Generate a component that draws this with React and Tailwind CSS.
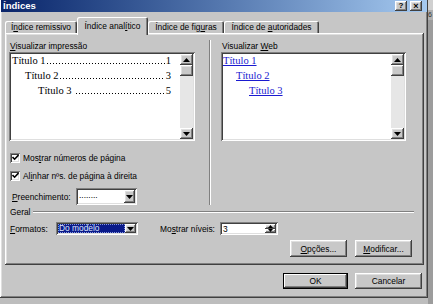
const raised =
  'shadow-[inset_-1px_-1px_0_#404040,inset_1px_1px_0_#ffffff,inset_-2px_-2px_0_#808080,inset_2px_2px_0_#dfdfdf]'
const sunken =
  'shadow-[inset_1px_1px_0_#808080,inset_-1px_-1px_0_#ffffff,inset_2px_2px_0_#404040,inset_-2px_-2px_0_#dfdfdf]'

function U({ children }) {
  return <span className="underline decoration-1 underline-offset-[1px]">{children}</span>
}

function Arrow({ up }) {
  return (
    <svg width="7" height="4" viewBox="0 0 7 4">
      {up ? <path d="M3.5 0 L7 4 L0 4 Z" fill="#000" /> : <path d="M0 0 L7 0 L3.5 4 Z" fill="#000" />}
    </svg>
  )
}

function ScrollBar() {
  return (
    <div className="w-[13px] shrink-0 h-full flex flex-col bg-[#e6e6e6]">
      <div className={`h-[11px] bg-[#c8c8c8] flex items-center justify-center ${raised}`}>
        <Arrow up />
      </div>
      <div className={`h-[11px] bg-[#c8c8c8] ${raised}`} />
      <div className="flex-1" />
      <div className={`h-[11px] bg-[#c8c8c8] flex items-center justify-center ${raised}`}>
        <Arrow />
      </div>
    </div>
  )
}

function Check() {
  return (
    <div className={`w-[10px] h-[10px] bg-white flex items-center justify-center ${sunken}`}>
      <svg width="7" height="7" viewBox="0 0 7 7">
        <path d="M0.5 3 L2.6 5.2 L6.5 1" stroke="#000" strokeWidth="1.6" fill="none" />
      </svg>
    </div>
  )
}

function DropButton({ h }) {
  return (
    <div className={`w-[11px] ${h} bg-[#c8c8c8] flex items-center justify-center ${raised}`}>
      <Arrow />
    </div>
  )
}

function Button({ w, children, def }) {
  return (
    <div
      className={`${w} h-full bg-[#c8c8c8] flex items-center justify-center ${
        def
          ? 'shadow-[inset_0_0_0_1px_#000000,inset_-2px_-2px_0_#404040,inset_2px_2px_0_#ffffff,inset_-3px_-3px_0_#808080]'
          : raised
      }`}
    >
      {children}
    </div>
  )
}

const tocRows = [
  { label: 'Título 1', page: '1', pad: 'pl-[1px]', gap: 'ml-[1px]' },
  { label: 'Título 2', page: '3', pad: 'pl-[14px]', gap: 'ml-[1px]' },
  { label: 'Título 3', page: '5', pad: 'pl-[27px]', gap: 'ml-[4px]' },
]

export default function App() {
  return (
    <div className="w-[433px] h-[304px] flex bg-[#bdbdbd] overflow-hidden font-['Liberation_Sans',Arial,sans-serif] text-[8.4px] leading-[10px] text-black">
      <div className={`w-[428px] h-[298px] shrink-0 bg-[#c6c6c6] flex flex-col ${raised}`}>
        {/* title bar */}
        <div className="h-[12px] mx-[1px] bg-gradient-to-r from-[#0a246a] to-[#a6caf0] flex items-center pl-[2px] pr-[5px]">
          <span className="text-white font-bold text-[9.5px] leading-[12px] flex-1">Índices</span>
          <div className={`w-[12px] h-[10px] bg-[#c8c8c8] flex items-center justify-center font-bold text-[8px] ${raised}`}>?</div>
          <div className={`ml-[3px] w-[12px] h-[10px] bg-[#c8c8c8] flex items-center justify-center font-bold text-[9px] ${raised}`}>×</div>
        </div>

        {/* tabs */}
        <div className="h-[21px] pl-[5px] flex items-end">
          <div className="w-[72px] h-[12px] flex items-center justify-center rounded-t-[2px] shadow-[inset_1px_1px_0_#ffffff,inset_-1px_0_0_#404040,inset_-2px_0_0_#808080]">
            <span>Í<U>n</U>dice remissivo</span>
          </div>
          <div className="relative z-10 -mb-[2px] w-[71px] h-[18px] pt-[4px] flex justify-center bg-[#c6c6c6] rounded-t-[2px] shadow-[inset_1px_1px_0_#ffffff,inset_-1px_0_0_#404040,inset_-2px_0_0_#808080]">
            <span>Índice anal<U>í</U>tico</span>
          </div>
          <div className="w-[76px] h-[12px] flex items-center justify-center rounded-t-[2px] shadow-[inset_1px_1px_0_#ffffff,inset_-1px_0_0_#404040,inset_-2px_0_0_#808080]">
            <span>Índice de fig<U>u</U>ras</span>
          </div>
          <div className="w-[95px] h-[12px] flex items-center justify-center rounded-t-[2px] shadow-[inset_1px_1px_0_#ffffff,inset_-1px_0_0_#404040,inset_-2px_0_0_#808080]">
            <span>Índice de <U>a</U>utoridades</span>
          </div>
        </div>

        {/* panel */}
        <div className={`ml-[5px] w-[419px] h-[232px] flex flex-col ${raised}`}>
          <div className="mt-[7px] h-[165px] flex">
            <div className="ml-[4px] w-[200px] flex flex-col">
              <div className="mt-[1px] pl-[1px] h-[10px]">
                <U>V</U>isualizar impressão
              </div>
              <div className={`mt-[1px] w-[186px] h-[89px] bg-white flex p-[2px] ${sunken}`}>
                <div className="flex-1 min-w-0 overflow-hidden -mt-[1px] pr-[9px] font-['Liberation_Serif','Times_New_Roman',serif] text-[10.5px] leading-[15px]">
                  {tocRows.map((r) => (
                    <div key={r.label} className={`h-[15px] flex ${r.pad}`}>
                      <span className="whitespace-nowrap">{r.label}</span>
                      <span
                        className={`flex-1 min-w-0 self-end mb-[4px] mr-[1px] h-[1px] bg-[linear-gradient(to_right,#000000_1px,transparent_1px)] bg-[length:3px_1px] bg-repeat-x ${r.gap}`}
                      />
                      <span>{r.page}</span>
                    </div>
                  ))}
                </div>
                <ScrollBar />
              </div>
              <div className="mt-[10px] h-[13px] flex items-center pl-[1px]">
                <Check />
                <span className="ml-[3px]">
                  Mos<U>t</U>rar números de página
                </span>
              </div>
              <div className="mt-[5px] h-[13px] flex items-center pl-[1px]">
                <Check />
                <span className="ml-[3px]">
                  Al<U>i</U>nhar nºs. de página à direita
                </span>
              </div>
              <div className="mt-[6px] h-[17px] flex items-center">
                <span className="ml-[3px] w-[64px]">
                  <U>P</U>reenchimento:
                </span>
                <div className={`w-[61px] h-[17px] bg-white flex items-center p-[2px] ${sunken}`}>
                  <span className="flex-1 pl-[1px] -mt-[3px]">........</span>
                  <DropButton h="h-[13px]" />
                </div>
              </div>
            </div>

            <div className="w-0 h-full border-l border-r border-l-[#808080] border-r-white" />

            <div className="ml-[10px] flex flex-col">
              <div className="mt-[1px] pl-[1px] h-[10px]">
                Visualizar <U>W</U>eb
              </div>
              <div className={`mt-[1px] w-[185px] h-[89px] bg-white flex p-[2px] ${sunken}`}>
                <div className="flex-1 min-w-0 -mt-[1px] font-['Liberation_Serif','Times_New_Roman',serif] text-[10.5px] leading-[15px] text-[#1a1ad0]">
                  <div className="h-[15px]"><span className="underline">Título 1</span></div>
                  <div className="h-[15px] pl-[13px]"><span className="underline">Título 2</span></div>
                  <div className="h-[15px] pl-[26px]"><span className="underline">Título 3</span></div>
                </div>
                <ScrollBar />
              </div>
            </div>
          </div>

          {/* Geral */}
          <div className="mt-[2px] h-[10px] flex items-center ml-[5px] mr-[10px]">
            <span>Geral</span>
            <div className="flex-1 ml-[3px] h-0 border-t border-b border-t-[#808080] border-b-white" />
          </div>

          <div className="mt-[5px] h-[13px] flex items-center">
            <span className="ml-[5px] w-[46px]">
              <U>F</U>ormatos:
            </span>
            <div className={`w-[82px] h-[13px] bg-white flex items-center p-[2px] ${sunken}`}>
              <span className="flex-1 h-full bg-[#0a1a8a] text-[#dde6ff] leading-[9px] pl-[1px] outline-1 outline-dotted outline-[#8899dd] -outline-offset-1">
                Do modelo
              </span>
              <DropButton h="h-[9px]" />
            </div>
            <span className="ml-[22px] w-[60px]">
              Mo<U>s</U>trar níveis:
            </span>
            <div className={`w-[58px] h-[13px] bg-white flex items-center p-[2px] ${sunken}`}>
              <span className="flex-1 pl-[1px]">3</span>
              <div className="w-[11px] h-full flex flex-col">
                <div className={`flex-1 bg-[#c8c8c8] flex items-center justify-center ${raised}`}>
                  <svg width="5" height="3" viewBox="0 0 5 3"><path d="M2.5 0 L5 3 L0 3 Z" fill="#000" /></svg>
                </div>
                <div className={`flex-1 bg-[#c8c8c8] flex items-center justify-center ${raised}`}>
                  <svg width="5" height="3" viewBox="0 0 5 3"><path d="M0 0 L5 0 L2.5 3 Z" fill="#000" /></svg>
                </div>
              </div>
            </div>
          </div>

          <div className="mt-[5px] h-[17px] flex justify-end gap-[8px] pr-[12px]">
            <Button w="w-[57px]">
              <span><U>O</U>pções...</span>
            </Button>
            <Button w="w-[57px]">
              <span><U>M</U>odificar...</span>
            </Button>
          </div>
        </div>

        {/* dialog buttons */}
        <div className="mt-[8px] h-[16px] flex justify-end gap-[7px] pr-[6px]">
          <Button w="w-[65px]" def>
            OK
          </Button>
          <Button w="w-[67px]">Cancelar</Button>
        </div>
      </div>

      <div className="flex-1 flex flex-col">
        <div className="h-[10px] bg-[#d0d0d0]" />
        <div className="h-[10px] bg-[#b0b0b0] text-[7px] leading-[10px] text-[#333]">6</div>
        <div className="flex-1 bg-[#9c9c9c]" />
      </div>
    </div>
  )
}
